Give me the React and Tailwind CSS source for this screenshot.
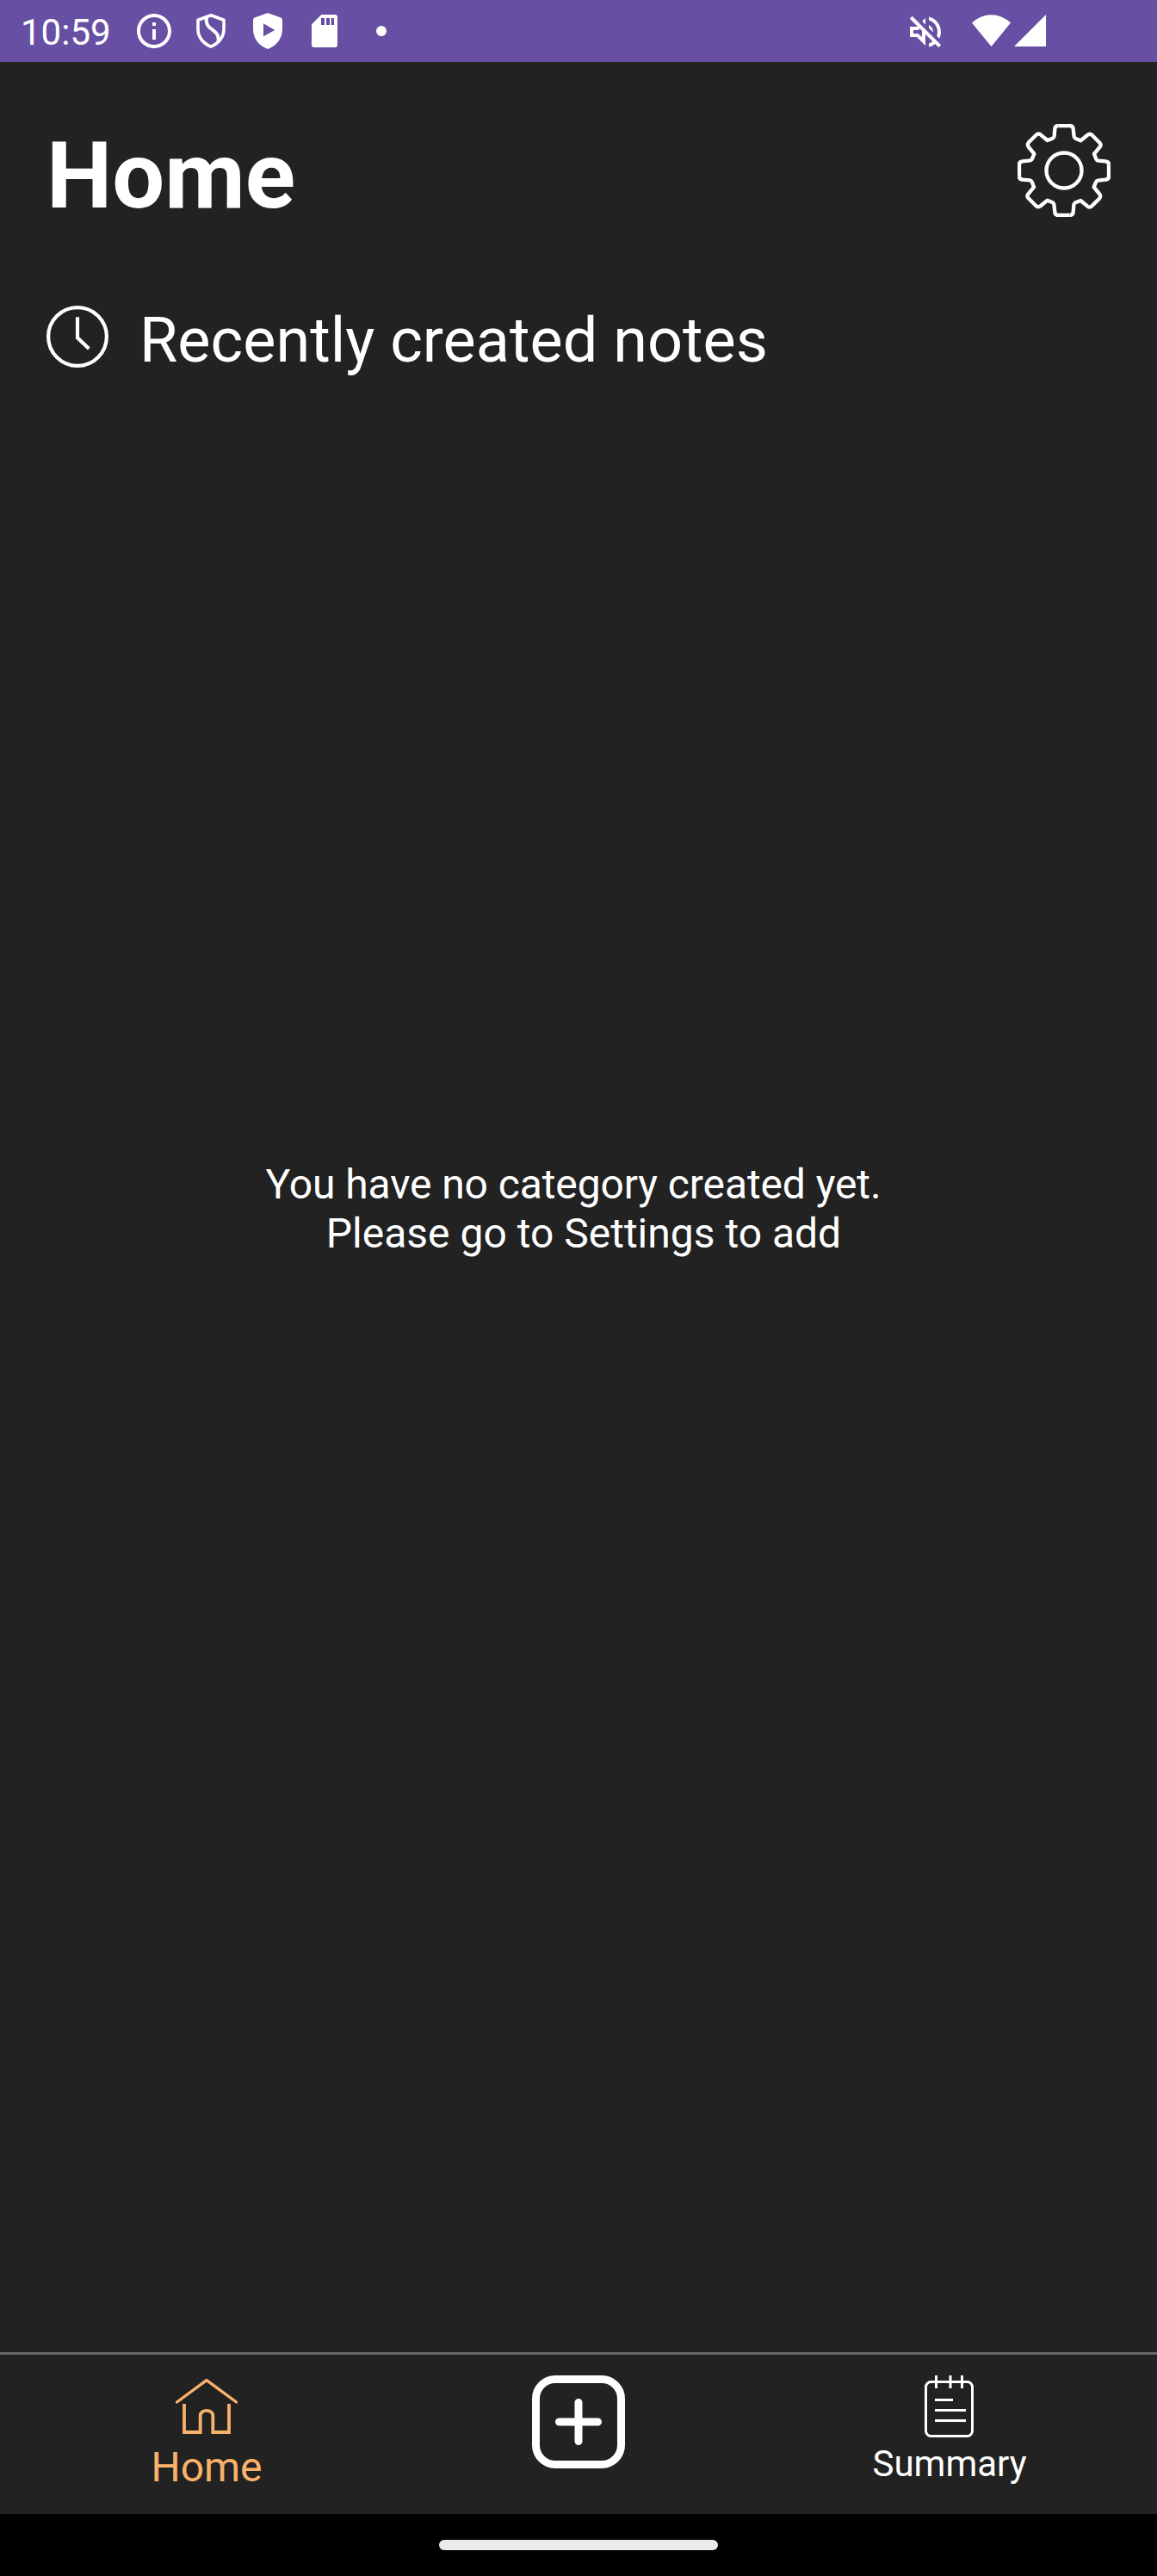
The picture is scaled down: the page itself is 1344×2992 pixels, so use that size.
import React from "react";

function InfoIcon() {
  return (
    <svg className="size-12" viewBox="0 0 24 24" fill="white">
      <path d="M11 7h2v2h-2zM11 11h2v6h-2zM12 2C6.48 2 2 6.48 2 12s4.48 10 10 10 10-4.48 10-10S17.52 2 12 2zm0 18c-4.41 0-8-3.59-8-8s3.59-8 8-8 8 3.59 8 8-3.59 8-8 8z" />
    </svg>
  );
}

function ShieldCurveIcon() {
  return (
    <svg className="h-12 w-[36px]" viewBox="0 0 36 48" fill="none" stroke="white" strokeWidth="3.6" strokeLinejoin="round">
      <path d="M18 5.8L3 11.2V22C3 31 9 38.5 18 42.2C27 38.5 33 31 33 22V11.2Z" />
      <path d="M13 8C12 13 12.6 16.5 16.5 20L22.5 24.8C26.5 28.2 27.2 31 26.6 35.5" strokeWidth="4" strokeLinecap="round" />
    </svg>
  );
}

function ShieldPlayIcon() {
  return (
    <svg className="h-12 w-[36px]" viewBox="0 0 36 48" fill="white" fillRule="evenodd">
      <path d="M18 3L33.2 8.6Q35 9.4 35 11.4V22C35 32.5 28.5 41 18 45C7.5 41 1 32.5 1 22V11.4Q1 9.4 2.8 8.6ZM13 15.3V30.3L26.3 23Z" />
    </svg>
  );
}

function SdCardIcon() {
  return (
    <svg className="h-12 w-[30px]" viewBox="0 0 30 48" fill="white" fillRule="evenodd">
      <path d="M11.3 5H27Q30 5 30 8V40Q30 43 27 43H3Q0 43 0 40V16.3ZM11 9V17H15V9ZM17 9V17H21V9ZM22.7 9V17H26V9Z" />
    </svg>
  );
}

function MutedIcon() {
  return (
    <svg className="mt-[2px] size-12" viewBox="0 0 24 24" fill="white">
      <path d="M4.34 2.93L2.93 4.34 7.29 8.7 7 9H3v6h4l5 5v-6.59l4.18 4.18c-.65.49-1.38.88-2.18 1.11v2.06c1.34-.3 2.57-.92 3.61-1.75l2.05 2.05 1.41-1.41L4.34 2.93zM10 15.17L7.83 13H5v-2h2.83l.88-.88L10 11.41v3.76zM19 12c0 .82-.15 1.61-.41 2.34l1.53 1.53c.56-1.17.88-2.48.88-3.87 0-4.28-2.99-7.86-7-8.77v2.06c2.89.86 5 3.54 5 6.71zm-7-8l-1.88 1.88L12 7.76zm4.5 8c0-1.77-1.02-3.29-2.5-4.03v1.79l2.48 2.48c.01-.08.02-.16.02-.24z" />
    </svg>
  );
}

function WifiIcon() {
  return (
    <svg className="h-12 w-[45px]" viewBox="0 0 45 48" fill="white">
      <path d="M22.5 42L0 14.5A32 32 0 0 1 45 14.5Z" />
    </svg>
  );
}

function SignalIcon() {
  return (
    <svg className="h-12 w-[37px]" viewBox="0 0 37 48" fill="white">
      <path d="M0 42H37V5Z" />
    </svg>
  );
}

function GearIcon() {
  const quarter =
    "M-20 -156H20Q31 -156 32 -145L35 -118Q36 -113 41 -111L58 -104L81 -123Q90 -130 98 -123L124 -97Q131 -90 125 -82L105 -58L112 -40Q114 -35 120 -34L145 -32Q156 -31 156 -20";
  return (
    <svg className="size-[108px]" viewBox="-162 -162 324 324" fill="none" stroke="white" strokeWidth="13" strokeLinejoin="round">
      <path d={quarter} />
      <path d={quarter} transform="rotate(90)" />
      <path d={quarter} transform="rotate(180)" />
      <path d={quarter} transform="rotate(270)" />
      <circle r="61.5" />
    </svg>
  );
}

function ClockIcon() {
  return (
    <svg className="size-[72px]" viewBox="0 0 72 72" fill="none" stroke="white" strokeWidth="4.2">
      <circle cx="36" cy="36" r="33.9" />
      <path d="M36 13.3V37.3L49.3 50" />
    </svg>
  );
}

function HomeIcon() {
  return (
    <svg className="size-[72px]" viewBox="0 0 72 72" fill="none" stroke="currentColor" strokeWidth="3.8">
      <path d="M1.5 31L36 5.6L70.5 31" strokeLinejoin="round" strokeLinecap="round" strokeWidth="3.4" />
      <path d="M10 33V66H28.7V46.5A7.3 5.7 0 0 1 43.3 46.5V66H62V33" />
    </svg>
  );
}

function AddIcon() {
  return (
    <svg className="size-[108px]" viewBox="0 0 108 108" fill="none" stroke="white" strokeWidth="9" strokeLinecap="round">
      <rect x="4.5" y="4.5" width="99" height="99" rx="22.5" />
      <path d="M54 31.5V76.5M31.5 54H76.5" />
    </svg>
  );
}

function NotepadIcon() {
  return (
    <svg className="size-[72px]" viewBox="0 0 72 72" fill="none" stroke="white" strokeWidth="3">
      <rect x="8.5" y="7.5" width="54" height="63" rx="6" />
      <path d="M20.5 0V15M37 0V15M50.5 0V15M19 28.5H40M19 40.5H55M19 52.5H55" />
    </svg>
  );
}

function StatusBar() {
  return (
    <header className="flex h-[72px] items-center justify-between bg-[#6750a4] pr-[129px] pl-6">
      <div className="flex items-center">
        <span className="mt-[3px] w-[131px] text-[42px] leading-[49px]">10:59</span>
        <InfoIcon />
        <div className="ml-6"><ShieldCurveIcon /></div>
        <div className="ml-[30px]"><ShieldPlayIcon /></div>
        <div className="ml-[33px]"><SdCardIcon /></div>
        <span className="ml-[45px] size-3 rounded-full bg-white" />
      </div>
      <div className="flex items-center">
        <MutedIcon />
        <div className="ml-[30px]"><WifiIcon /></div>
        <div className="ml-1"><SignalIcon /></div>
      </div>
    </header>
  );
}

function NavBar() {
  return (
    <nav className="flex h-[188px] border-t-[3px] border-[#666666] pt-6">
      <button className="flex w-[480px] flex-col items-center text-[#f9b16b]">
        <HomeIcon />
        <span className="mt-[6px] text-[48px] leading-[57px]">Home</span>
      </button>
      <button className="flex w-[384px] flex-col items-center">
        <AddIcon />
      </button>
      <button className="flex w-[480px] flex-col items-center pr-[2px]">
        <NotepadIcon />
        <span className="mt-[6px] text-[42px] leading-[49px]">Summary</span>
      </button>
    </nav>
  );
}

export default function App() {
  return (
    <div className="flex h-[2992px] w-[1344px] flex-col bg-[#222222] font-['Roboto',sans-serif] text-white">
      <StatusBar />
      <main className="flex flex-1 flex-col">
        <div className="flex items-start justify-between px-[54px] pt-[72px]">
          <h1 className="-mt-[3px] text-[108px] leading-[126px] font-bold">Home</h1>
          <GearIcon />
        </div>
        <div className="mt-[86px] flex items-start gap-9 px-[54px]">
          <div className="mt-[2px]"><ClockIcon /></div>
          <h2 className="text-[72px] leading-[85px]">Recently created notes</h2>
        </div>
        <p className="mt-[909px] text-center text-[48px] leading-[57px] whitespace-pre">
          <span className="block pr-3 tracking-[-0.1px]">You have no category created yet.</span>
          <span className="block pl-3">Please go to Settings to add</span>
        </p>
      </main>
      <NavBar />
      <footer className="flex h-[72px] items-center justify-center bg-black">
        <span className="h-3 w-[324px] rounded-full bg-[#ebebeb]" />
      </footer>
    </div>
  );
}
